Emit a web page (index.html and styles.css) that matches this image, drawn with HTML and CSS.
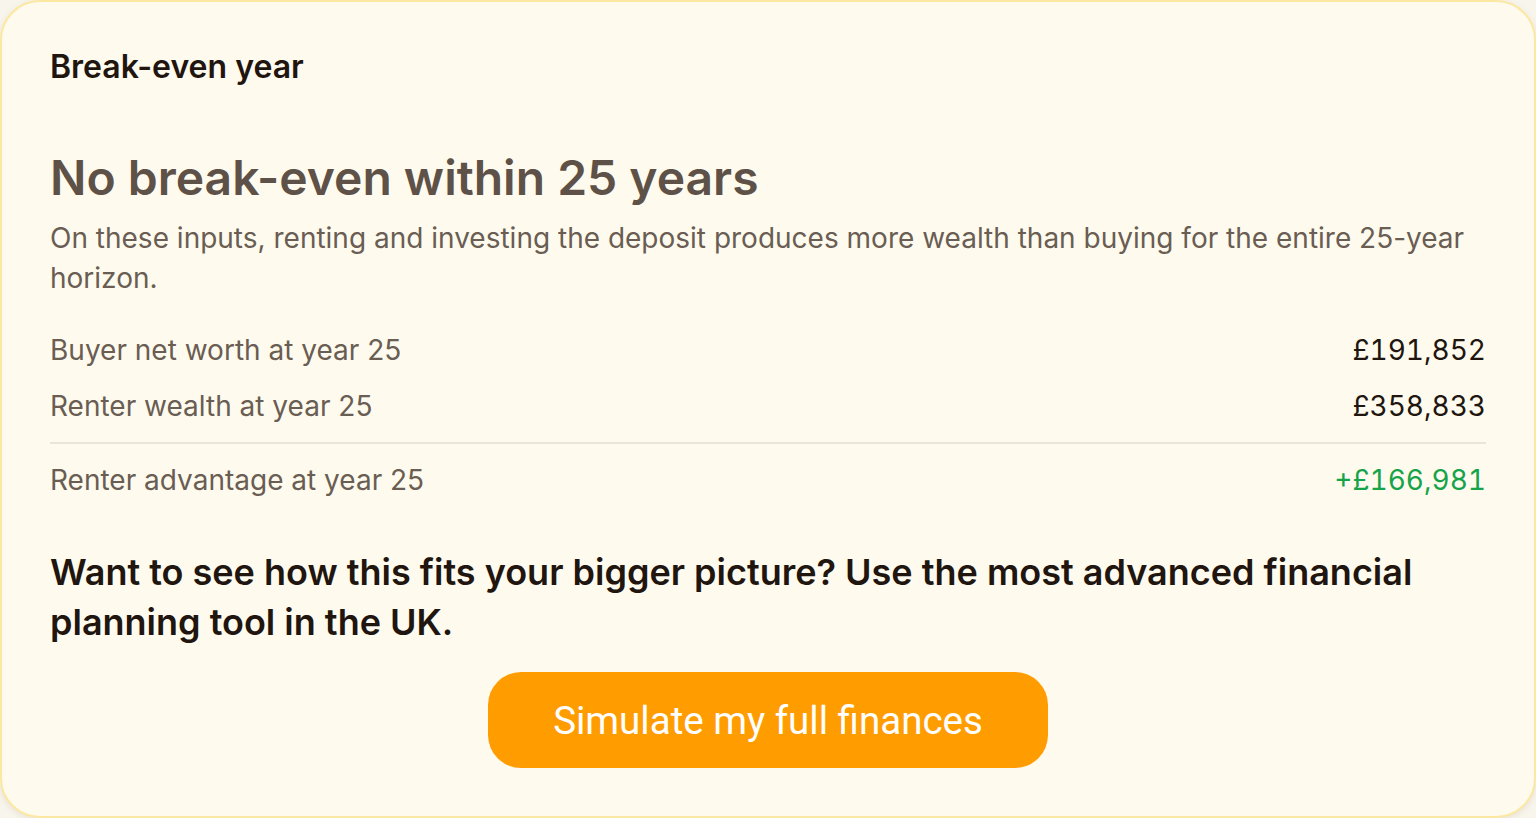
FILE: index.html
```html
<!DOCTYPE html>
<html lang="en">
<head>
  <meta charset="UTF-8">
  <title>Break-even year</title>
  <meta name="viewport" content="width=device-width, initial-scale=1.0">
  <link rel="stylesheet" href="styles.css">
</head>
<body>

  <div class="card">
    <h3 class="card-title">Break-even year</h3>

    <h2 class="headline">No break-even within 25 years</h2>
    <p class="summary">On these inputs, renting and investing the deposit produces more wealth than buying for the entire 25-year horizon.</p>

    <div class="rows">
      <div class="row">
        <span class="label">Buyer net worth at year 25</span>
        <span class="value">£191,852</span>
      </div>
      <div class="row">
        <span class="label">Renter wealth at year 25</span>
        <span class="value">£358,833</span>
      </div>
      <div class="row total">
        <span class="label">Renter advantage at year 25</span>
        <span class="value positive">+£166,981</span>
      </div>
    </div>

    <p class="cta-text">Want to see how this fits your bigger picture? Use the most advanced financial planning tool in the UK.</p>

    <div class="cta-wrap">
      <button class="cta-btn">Simulate my full finances</button>
    </div>
  </div>

</body>
</html>
```

FILE: styles.css
```css
body {
  margin: 0;
  font-family: 'Inter', 'Noto Sans', sans-serif;
  background: #f8f5ec;
  color: #21150f;
}

.card {
  background: #fefbee;
  border: 2px solid #fce8a2;
  border-radius: 40px;
  padding: 45px 48px 48px;
  box-shadow: 0 2px 6px rgba(120, 90, 40, 0.12);
}

.card-title {
  margin: 0;
  font-size: 32px;
  font-weight: 600;
  line-height: 40px;
  color: #21150f;
}

.headline {
  margin: 61px 0 0;
  font-size: 48px;
  font-weight: 600;
  line-height: 60px;
  color: #5e5148;
}

.summary {
  margin: 10px 0 0;
  font-size: 28px;
  line-height: 40px;
  color: #6a5d53;
}

.rows {
  margin-top: 24px;
}

.row {
  display: flex;
  justify-content: space-between;
  align-items: center;
  font-size: 28px;
  line-height: 40px;
  padding: 8px 0;
}

.row.total {
  border-top: 2px solid #ebe5d8;
  margin-top: 8px;
  padding-top: 16px;
}

.label {
  color: #6a5d53;
}

.value {
  color: #21150f;
  font-variant-numeric: tabular-nums;
}

.value.positive {
  color: #16a34a;
}

.cta-text {
  margin: 39px 0 0;
  font-size: 36px;
  font-weight: 600;
  line-height: 50px;
  color: #21150f;
}

.cta-wrap {
  display: flex;
  justify-content: center;
  margin-top: 25px;
}

.cta-btn {
  width: 560px;
  height: 96px;
  border: none;
  border-radius: 33px;
  background: #ff9c00;
  color: #fff;
  font-family: 'Roboto', sans-serif;
  font-size: 38.5px;
  cursor: pointer;
}
```
